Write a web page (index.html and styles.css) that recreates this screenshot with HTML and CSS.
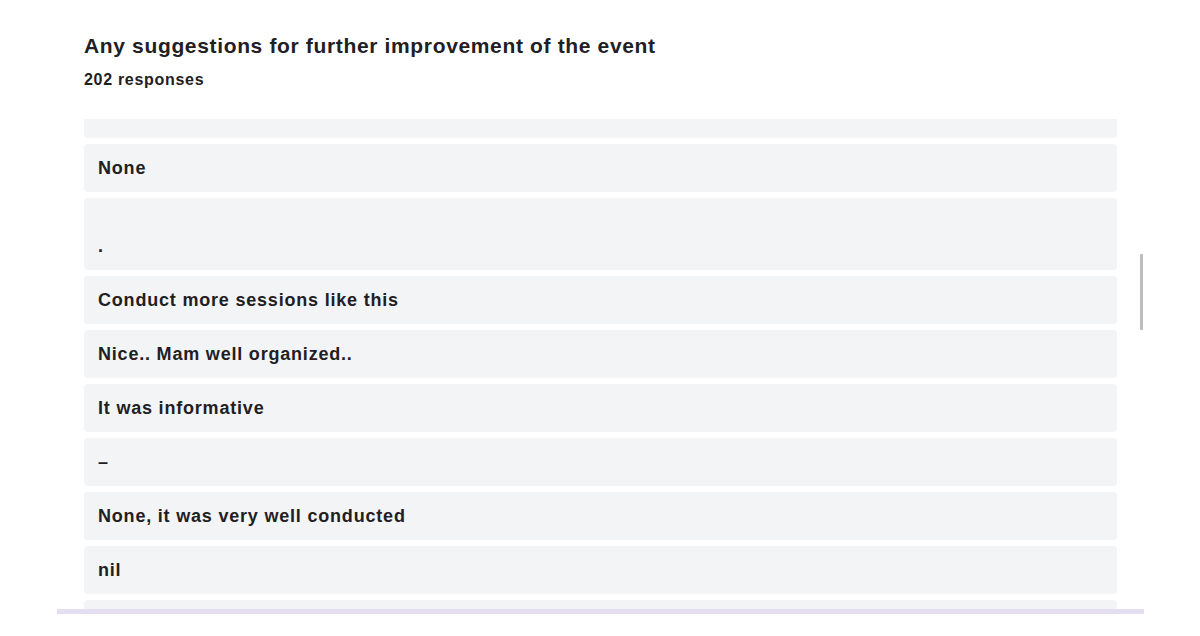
FILE: index.html
```html
<!DOCTYPE html>
<html>
<head>
<meta charset="utf-8">
<link rel="stylesheet" href="styles.css">
</head>
<body>
<div class="panel">
  <div class="header">
    <h1 class="title">Any suggestions for further improvement of the event</h1>
    <div class="count">202 responses</div>
  </div>
  <div class="viewport">
    <div class="list">
      <div class="item">&nbsp;</div>
      <div class="item">None</div>
      <div class="item"><br>.</div>
      <div class="item">Conduct more sessions like this</div>
      <div class="item">Nice.. Mam well organized..</div>
      <div class="item">It was informative</div>
      <div class="item">–</div>
      <div class="item">None, it was very well conducted</div>
      <div class="item">nil</div>
      <div class="item">&nbsp;</div>
    </div>
    <div class="scrollbar"></div>
  </div>
</div>
</body>
</html>
```

FILE: styles.css
```css
html, body {
  margin: 0;
  padding: 0;
  background: #ffffff;
}
body {
  font-family: "Liberation Sans", Arial, sans-serif;
  color: #1f2023;
}
.panel {
  width: 1087px;
  margin-left: 57px;
  border-bottom: 5px solid #e3def0;
}
.header {
  padding: 32px 0 0 27px;
  height: 119px;
  box-sizing: border-box;
}
.title {
  margin: 0;
  font-size: 21px;
  font-weight: 700;
  line-height: 28px;
  letter-spacing: 0.65px;
}
.count {
  margin-top: 10px;
  font-size: 16px;
  font-weight: 700;
  line-height: 20px;
  letter-spacing: 0.7px;
}
.viewport {
  position: relative;
  height: 490px;
  overflow: hidden;
  padding: 0 27px;
}
.list {
  display: flex;
  flex-direction: column;
  gap: 6px;
  margin-top: -29px;
}
.item {
  background: #f3f4f6;
  border-radius: 4px;
  padding: 12px 14px;
  font-size: 18px;
  font-weight: 700;
  line-height: 24px;
  letter-spacing: 0.8px;
}
.scrollbar {
  position: absolute;
  right: 1px;
  top: 135px;
  width: 3px;
  height: 76px;
  background: #bdbdbd;
  border-radius: 1px;
}
```
